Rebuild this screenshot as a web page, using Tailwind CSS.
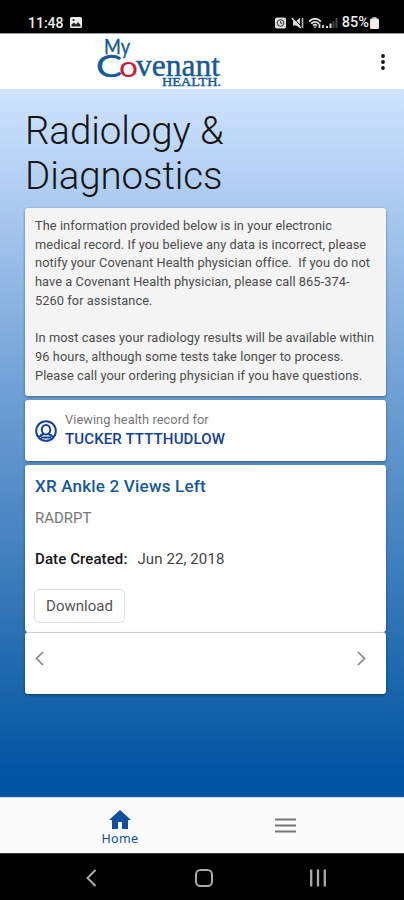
<!DOCTYPE html>
<html lang="en">
<head>
  <meta charset="UTF-8">
  <meta name="viewport" content="width=device-width,initial-scale=1">
  <title>My Covenant Health – Radiology &amp; Diagnostics</title>
  <script src="https://cdn.jsdelivr.net/npm/@tailwindcss/browser@4"></script>
</head>
<body class="h-[900px] w-[404px] flex flex-col overflow-hidden bg-black font-[Roboto,sans-serif] text-[#444]">

  <!-- STATUS BAR -->
  <div class="h-[33px] shrink-0 flex items-end justify-between pl-7 pr-[25px] pb-[3px] text-[#eee] text-[14px] leading-[14px]">
    <div class="flex items-center gap-[6px] h-[14px]">
      <span class="font-medium">11:48</span>
      <svg class="w-3 h-3" viewBox="0 0 12 12">
        <rect width="12" height="11" rx="1.5" fill="#eee"/>
        <path d="M1.5 9.5V7.5L4 5.5l2 2 2-2.5 2.5 3v1.5z" fill="#222"/>
        <circle cx="3.5" cy="3" r="1.1" fill="#222"/>
      </svg>
    </div>
    <div class="flex items-center h-[14px]">
      <!-- alarm -->
      <svg class="w-[11px] h-3 mr-[5px]" viewBox="0 0 11 12">
        <path d="M0 1.5 2 .5h7l2 1v9l-1.5 1h-8L0 10.5z" fill="#ddd"/>
        <circle cx="5.5" cy="6" r="3.3" fill="none" stroke="#333" stroke-width="1"/>
        <path d="M5.5 4v2.2h1.700" fill="none" stroke="#333" stroke-width=".9"/>
      </svg>
      <!-- muted -->
      <svg class="w-[13px] h-3 mr-[4px]" viewBox="0 0 13 12">
        <path d="M2 4h3l4-3v10L5 8.500H2z" fill="#ddd"/>
        <path d="M1.800 0l9 10" stroke="#111" stroke-width="1"/>
        <path d="M.8 1l9 10" stroke="#ddd" stroke-width="1.400"/>
        <path d="M11.500 1v10" stroke="#bbb" stroke-width="1.600"/>
      </svg>
      <!-- wifi -->
      <svg class="w-[17px] h-3 mr-[1px]" viewBox="0 0 17 12">
        <path d="M1 4.500Q7 -1 13 4.500M3 6.700q4-3.700 8 0M5 8.700q2-2 4 0" fill="none" stroke="#ddd" stroke-width="1.700"/>
        <path d="M5.500 9.500h3L7 11.500z" fill="#ddd"/>
        <path d="M11.500 6.500v4.500M15 11V8" fill="none" stroke="#ddd" stroke-width="1.800"/>
      </svg>
      <!-- signal -->
      <svg class="w-3 h-3 mr-[4px]" viewBox="0 0 12 12">
        <path d="M1 9v2M4.500 6.500v4.500" stroke="#ddd" stroke-width="2"/>
        <path d="M7.500 4v7M10.500 1v10" stroke="#444" stroke-width="2"/>
      </svg>
      <span class="font-medium text-[14.500px]">85%</span>
      <svg class="w-[9px] h-3 ml-[1px]" viewBox="0 0 9 12">
        <rect x="2.5" width="4" height="3" fill="#aaa"/>
        <rect y="1.5" width="9" height="10.5" rx="1.5" fill="#eee"/>
      </svg>
    </div>
  </div>

  <!-- HEADER -->
  <header class="h-14 shrink-0 bg-white border-t border-[#999] flex items-center justify-between pl-[97px] pr-[19px]">
    <svg class="w-[126px] h-[54px] overflow-visible" viewBox="0 0 126 54" fill="#15599a" stroke="#15599a" stroke-width=".4">
      <text x="7" y="18.5" font-family="Lato" font-size="22" textLength="26" lengthAdjust="spacingAndGlyphs">My</text>
      <text x="-1" y="42" font-family="Lato" font-size="31" textLength="26" lengthAdjust="spacingAndGlyphs">C</text>
      <text x="22" y="42" font-family="Lato" font-size="28" fill="#c8203f" stroke="none" textLength="19" lengthAdjust="spacingAndGlyphs">o</text>
      <text x="39" y="41" font-family="Liberation Serif" font-size="31" textLength="84" lengthAdjust="spacingAndGlyphs">venant</text>
      <text x="65" y="51" font-family="Liberation Serif" font-size="12.5" textLength="59" lengthAdjust="spacingAndGlyphs">HEALTH.</text>
    </svg>
    <svg class="w-1 h-4" viewBox="0 0 4 16" fill="#111">
      <circle cx="2" cy="2" r="1.9"/><circle cx="2" cy="8" r="1.9"/><circle cx="2" cy="14" r="1.9"/>
    </svg>
  </header>

  <!-- MAIN -->
  <main class="h-[708px] shrink-0 pl-[25px] pr-[18px] pt-[20px] bg-linear-[180deg,#cfe3ff_0%,#a9c9ee_17%,#6fa1d5_42%,#4a86c2_62%,#1b66ac_84%,#0054a0_97%]">
    <h1 class="h-[99px] text-[38.500px] leading-[44.500px] font-[350] tracking-[-0.1px] text-[#151515]">Radiology &amp;<br>Diagnostics</h1>

    <!-- Notice -->
    <section class="h-[188px] bg-[#f4f4f4] rounded-[3px] shadow-[0_1px_3px_#0006] px-[10px] pt-[9px] text-[12.800px] leading-[18.700px] tracking-[0.07px] whitespace-nowrap text-[#4c4c4c]">
      <p>The information provided below is in your electronic<br>medical record. If you believe any data is incorrect, please<br>notify your Covenant Health physician office.&nbsp; If you do not<br>have a Covenant Health physician, please call 865-374-<br>5260 for assistance.</p>
      <p class="mt-[18.700px]">In most cases your radiology results will be available within<br>96 hours, although some tests take longer to process.<br>Please call your ordering physician if you have questions.</p>
    </section>

    <!-- Patient -->
    <section class="mt-1 h-[61px] bg-white rounded-[3px] shadow-[0_1px_3px_#0006] flex items-center gap-2 pl-[10px]">
      <svg class="w-[22px] h-[22px]" viewBox="0 0 22 22" fill="none" stroke="#11419b" stroke-width="2">
        <circle cx="11" cy="11" r="9.8"/>
        <ellipse cx="11" cy="9.8" rx="4.2" ry="4.8"/>
        <path d="M4.500 17c.8-2 2.300-2.500 4.500-3M17.500 17c-.8-2-2.300-2.500-4.500-3M6 17.500h10"/>
      </svg>
      <div class="-mt-[2px]">
        <p class="text-[12.800px] leading-[19px] tracking-[0.06px] text-[#777]">Viewing health record for</p>
        <p class="text-[15px] leading-[20px] tracking-[0.13px] font-medium text-[#11419b]">TUCKER TTTTHUDLOW</p>
      </div>
    </section>

    <!-- Result -->
    <section class="mt-1 h-[167px] bg-white rounded-[3px] shadow-[0_1px_3px_#0006] px-[10px] pt-[10px]">
      <h2 class="text-[17px] leading-[22px] font-medium tracking-[0.2px] text-[#14599b]">XR Ankle 2 Views Left</h2>
      <p class="mt-[11px] text-[15px] leading-5 text-[#777]">RADRPT</p>
      <p class="mt-[21px] text-[15px] leading-5 tracking-[0.1px] flex gap-[10px]"><span class="font-medium text-[#151515]">Date Created:</span><span>Jun 22, 2018</span></p>
      <button class="mt-[20px] -ml-px w-[91px] h-[34px] border border-[#ddd] rounded-[5px] text-[15px] text-[#555]">Download</button>
    </section>
    <div class="mt-px h-[61px] bg-white rounded-[3px] shadow-[0_1px_3px_#0006,0_-1px_0_#ddd] flex justify-between pl-[10px] pr-5 pt-[18px]">
      <svg class="w-[9px] h-[15px]" viewBox="0 0 9 15" fill="none" stroke="#888" stroke-width="1.7"><path d="M8 1 1.500 7.500 8 14"/></svg>
      <svg class="w-[9px] h-[15px]" viewBox="0 0 9 15" fill="none" stroke="#888" stroke-width="1.7"><path d="M1 1l6.500 6.500L1 14"/></svg>
    </div>
  </main>

  <!-- TAB BAR -->
  <nav class="h-14 shrink-0 bg-[#fbfbfb] border-t border-[#c5d5e5] flex">
    <div class="w-[240px] flex flex-col items-center pt-3 text-[#0f4f9e]">
      <svg class="w-[22px] h-[19px]" viewBox="0 0 22 19" fill="currentColor"><path d="M11 0 0 10h3v9h6v-7h4v7h6v-9h3z"/></svg>
      <span class="mt-[2px] text-[12.500px] leading-4 tracking-[0.4px] font-['Noto_Sans']">Home</span>
    </div>
    <div class="pl-[35px] pt-5">
      <svg class="w-[21px] h-[15px]" viewBox="0 0 21 15" stroke="#777" stroke-width="2"><path d="M0 1.500h21M0 7.500h21M0 13.500h21"/></svg>
    </div>
  </nav>

  <!-- SYSTEM NAV -->
  <div class="h-[47px] shrink-0 bg-black border-t border-[#333] flex items-start pl-[86px] pt-[14px]">
    <svg class="w-[10px] h-5" viewBox="0 0 10 20" fill="none" stroke="#aaa" stroke-width="2"><path d="M9.500 2 1.500 10l8 8"/></svg>
    <svg class="w-[18px] h-5 ml-[99px]" viewBox="0 0 18 20" fill="none" stroke="#aaa" stroke-width="2"><rect x="1" y="2" width="16" height="16" rx="4.5"/></svg>
    <svg class="w-4 h-5 ml-[97px]" viewBox="0 0 16 20" stroke="#aaa" stroke-width="2.3"><path d="M1.200 1.500v17M8 1.500v17M14.800 1.500v17"/></svg>
  </div>

</body>
</html>
